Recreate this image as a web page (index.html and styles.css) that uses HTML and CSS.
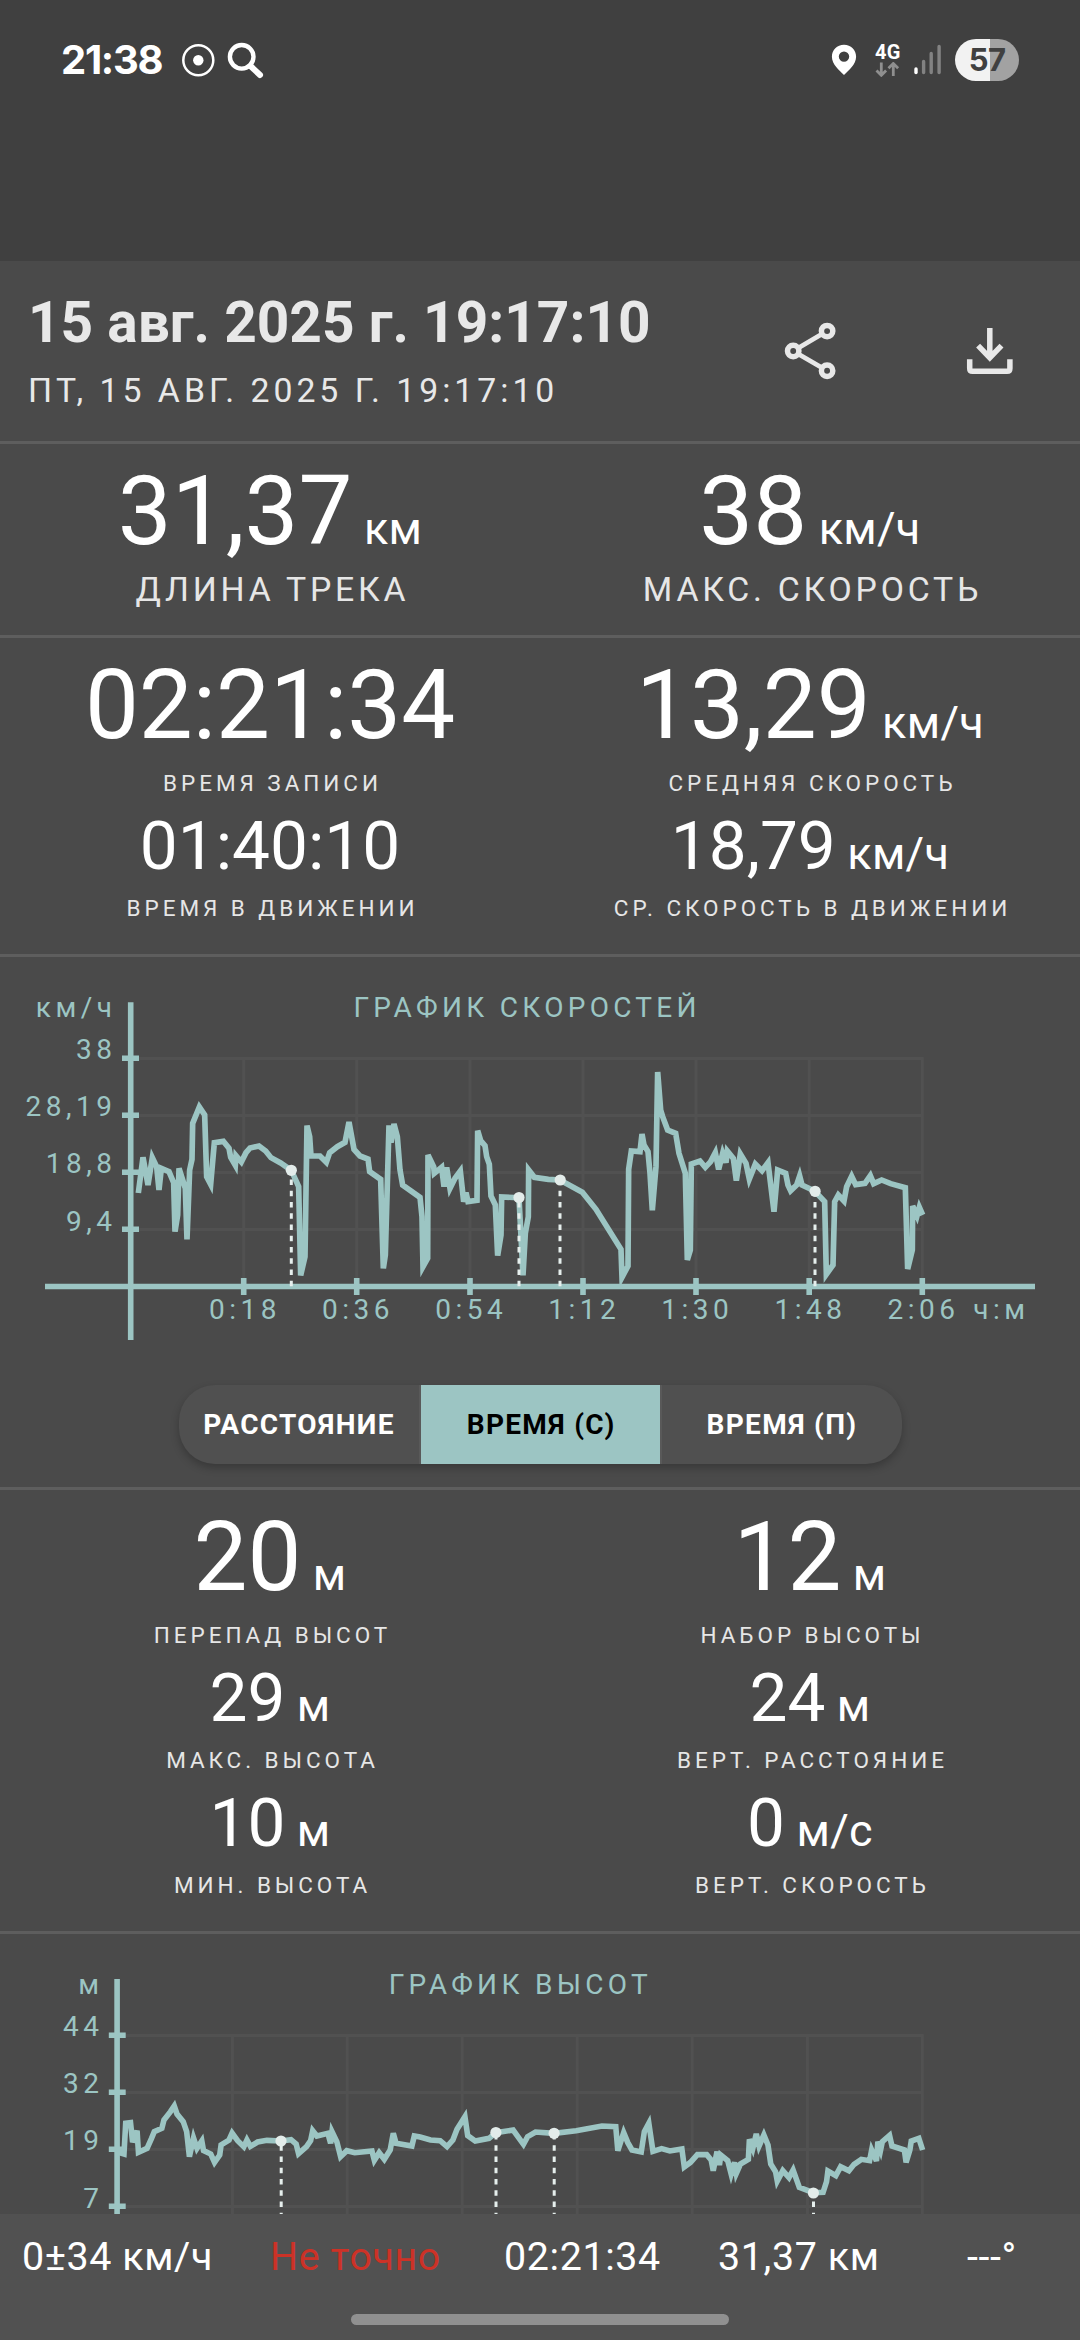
FILE: index.html
```html
<!DOCTYPE html>
<html lang="ru">
<head>
<meta charset="utf-8">
<title>15 авг. 2025 г. 19:17:10</title>
<link rel="stylesheet" href="styles.css">
</head>
<body>
<div class="screen">
  <div class="status">
    <div class="status-row">
      <span class="clock">21:38</span>
      <svg class="status-left" viewBox="180 34 90 50" width="90" height="50">
        <circle cx="198.3" cy="60.3" r="15" fill="none" stroke="#fff" stroke-width="2.5"/>
        <circle cx="198.3" cy="60.3" r="5.2" fill="#fff"/>
        <circle cx="241.7" cy="56.8" r="11.8" fill="none" stroke="#fff" stroke-width="4.4"/>
        <path d="M250.5 66L260 75" fill="none" stroke="#fff" stroke-width="6" stroke-linecap="round"/>
      </svg>
      <svg class="pin" viewBox="830 34 28 50" width="28" height="50">
        <path fill="#fff" fill-rule="evenodd" d="M844 44.7c-7 0-12.1 5.2-12.1 12 0 8 7.500 13.200 12.100 18.300c4.600-5.100 12.100-10.300 12.100-18.300c0-6.800-5.100-12-12.100-12zM844 51.400a5.200 5.200 0 1 1 0 10.400a5.200 5.200 0 1 1 0-10.400z"/>
      </svg>
      <div class="net">
        <span class="net-type">4G</span>
        <svg viewBox="875 62 26 15" width="26" height="15" fill="none" stroke="#8f8f8f" stroke-width="2.8">
          <path d="M881.300 62.500V75M876.500 70.500l4.800 4.800l4.800-4.800M893.300 76V63.700M888.500 68.300l4.800-4.800l4.800 4.800"/>
        </svg>
      </div>
      <svg class="signal" viewBox="912 34 32 50" width="32" height="50" stroke-width="3.400" stroke-linecap="round">
        <path stroke="#fff" d="M916 69V72.600"/>
        <path stroke="#828282" d="M923.600 61.500V72.600M931.200 53.500V72.600M939.100 46.500V72.600"/>
      </svg>
      <div class="battery">57</div>
    </div>
  </div>

  <header class="header">
    <div class="titles">
      <h1 class="title">15 авг. 2025 г. 19:17:10</h1>
      <div class="subtitle">ПТ, 15 АВГ. 2025 Г. 19:17:10</div>
    </div>
    <svg class="share" viewBox="780 320 60 60" width="60" height="60" fill="none" stroke="#e8e8e8" stroke-width="5.500">
      <circle cx="827.100" cy="331.100" r="5.700"/><circle cx="793.200" cy="351" r="5.700"/><circle cx="827.100" cy="370.700" r="5.700"/>
      <path stroke-width="4.800" d="M798.300 348L822 334M798.300 354L822 367.800"/>
    </svg>
    <svg class="download" viewBox="960 320 60 60" width="60" height="60" fill="none" stroke="#e8e8e8" stroke-width="5.500">
      <path d="M989.800 328V357M978.100 345.700l11.700 12l11.700-12M969.700 359.300v9.200q0 2.800 2.800 2.800h34.600q2.800 0 2.800-2.800v-9.200"/>
    </svg>
  </header>

  <section class="stats one">
    <div class="cell">
      <div class="big">31,37<small> км</small></div>
      <div class="label wide">ДЛИНА ТРЕКА</div>
    </div>
    <div class="cell">
      <div class="big">38<small> км/ч</small></div>
      <div class="label wide">МАКС. СКОРОСТЬ</div>
    </div>
  </section>

  <section class="stats two">
    <div class="cell">
      <div class="big">02:21:34</div><div class="label">ВРЕМЯ ЗАПИСИ</div>
      <div class="mid">01:40:10</div><div class="label">ВРЕМЯ В ДВИЖЕНИИ</div>
    </div>
    <div class="cell">
      <div class="big">13,29<small> км/ч</small></div><div class="label">СРЕДНЯЯ СКОРОСТЬ</div>
      <div class="mid">18,79<small> км/ч</small></div><div class="label">СР. СКОРОСТЬ В ДВИЖЕНИИ</div>
    </div>
  </section>

  <section class="speed">
    <svg class="chart" viewBox="0 957 1080 428" width="1080" height="428">
      <path class="grid" d="M131 1058.500H923.700M131 1115.500H922M131 1172.500H922M131 1229.500H922M243.700 1058V1286M356.700 1058V1286M470 1058V1286M583 1058V1286M696 1058V1286M809.200 1058V1286M922.300 1058V1286"/>
      <path class="axis" d="M130.700 1002.300V1340M45 1286.500H1035M122 1058.300H139M122 1115.300H139M122 1172.300H139M122 1229.300H139M243.700 1278V1295M356.700 1278V1295M470 1278V1295M583 1278V1295M696 1278V1295M809.200 1278V1295M922.300 1278V1295"/>
      <!-- plot units: one third of a pixel -->
      <polyline class="line" transform="translate(0 970) scale(.33333)" points="415,669 429,562 444,645 457,563 470,590 477,660 484,595 507,605 521,638 525,785 533,735 537,595 556,655 561,808 569,600 576,568 578,460 598,411 614,435 620,620 632,643 643,518 670,514 687,535 692,562 706,586 708,557 724,576 738,548 750,534 777,528 797,543 813,563 842,579 874,601 896,650 902,916 915,860 921,467 929,500 933,558 960,558 979,577 989,548 1012,530 1035,517 1047,456 1062,538 1080,558 1104,567 1109,605 1142,628 1150,895 1156,855 1167,466 1173,518 1182,462 1192,500 1200,600 1208,645 1260,682 1266,740 1269,890 1283,865 1284,555 1301,590 1303,610 1325,592 1332,650 1340,592 1350,655 1365,625 1381,603 1391,695 1398,668 1404,695 1431,691 1433,482 1442,512 1455,527 1460,560 1468,583 1473,678 1486,705 1493,857 1503,795 1505,681 1557,683 1569,916 1576,790 1585,740 1586,600 1603,622 1645,628 1680,630 1747,667 1788,718 1863,838 1866,922 1884,888 1886,598 1894,543 1920,545 1926,492 1932,525 1944,545 1950,610 1957,721 1968,590 1973,306 1982,420 1988,440 2003,480 2027,490 2037,550 2056,610 2062,870 2071,840 2074,582 2100,573 2116,592 2132,575 2146,548 2156,598 2168,550 2178,578 2182,543 2200,565 2209,632 2221,552 2238,580 2248,627 2266,582 2286,602 2304,578 2322,725 2333,600 2357,610 2364,645 2372,662 2390,645 2399,618 2406,645 2444,663 2474,695 2479,913 2499,885 2504,695 2515,675 2532,693 2540,650 2555,619 2567,644 2595,640 2611,617 2621,641 2645,630 2672,641 2716,653 2723,897 2737,840 2738,708 2751,738 2758,712 2768,735"/>
      <path class="drop" d="M291.300 1286.300V1170M519 1286.300V1198M560 1286.300V1180M815 1286.300V1192"/>
      <g class="dot"><circle cx="291.300" cy="1170.300" r="5.600"/><circle cx="519" cy="1197.500" r="5.600"/><circle cx="560.200" cy="1180" r="5.600"/><circle cx="815.100" cy="1191.300" r="5.600"/></g>
      <text x="353.500" y="1017">ГРАФИК СКОРОСТЕЙ</text>
      <g class="y-labels"><text x="116.500" y="1017">км/ч</text><text x="116.500" y="1059">38</text><text x="116.500" y="1116">28,19</text><text x="116.500" y="1173">18,8</text><text x="116.500" y="1230.500">9,4</text></g>
      <g class="x-labels"><text x="245" y="1319">0:18</text><text x="358" y="1319">0:36</text><text x="471.300" y="1319">0:54</text><text x="584.300" y="1319">1:12</text><text x="697.300" y="1319">1:30</text><text x="810.500" y="1319">1:48</text><text x="923.500" y="1319">2:06</text><text x="1001.500" y="1319">ч:м</text></g>
    </svg>
    <div class="tabs">
      <div class="tab">РАССТОЯНИЕ</div>
      <div class="tab active">ВРЕМЯ (С)</div>
      <div class="tab">ВРЕМЯ (П)</div>
    </div>
  </section>

  <section class="stats three">
    <div class="cell">
      <div class="big">20<small> м</small></div><div class="label">ПЕРЕПАД ВЫСОТ</div>
      <div class="mid">29<small> м</small></div><div class="label">МАКС. ВЫСОТА</div>
      <div class="mid">10<small> м</small></div><div class="label">МИН. ВЫСОТА</div>
    </div>
    <div class="cell">
      <div class="big">12<small> м</small></div><div class="label">НАБОР ВЫСОТЫ</div>
      <div class="mid">24<small> м</small></div><div class="label">ВЕРТ. РАССТОЯНИЕ</div>
      <div class="mid">0<small> м/с</small></div><div class="label">ВЕРТ. СКОРОСТЬ</div>
    </div>
  </section>

  <section class="height">
    <svg class="chart" viewBox="0 1934 1080 280" width="1080" height="280">
      <path class="grid" d="M117 2035.500H923.700M117 2092.500H922M117 2149.500H922M117 2206.500H922M232.400 2035V2214M347.200 2035V2214M462.200 2035V2214M577.200 2035V2214M692.200 2035V2214M807.400 2035V2214M922.300 2035V2214"/>
      <path class="axis" d="M117.100 1979V2214M108.800 2035.300H125.700M108.800 2092.300H125.700M108.800 2149.300H125.700M108.800 2206.300H125.700"/>
      <polyline class="line fixed" transform="translate(0 1930) scale(.34439 .33333)" points="342,666 360,672 365,580 379,578 385,637 398,602 402,667 427,655 440,625 448,605 470,595 476,570 495,545 506,528 514,552 532,575 542,605 550,680 562,624 572,655 586,633 591,662 612,672 623,697 638,675 642,645 665,630 674,609 690,632 708,650 717,630 727,649 748,636 775,631 816,633 845,629 860,642 867,671 890,650 902,632 908,602 920,618 952,610 960,640 964,605 978,635 989,680 1007,662 1030,668 1080,663 1087,691 1101,668 1116,688 1133,660 1142,610 1150,640 1196,648 1203,618 1220,621 1250,630 1278,632 1298,650 1315,630 1327,598 1350,560 1358,617 1380,633 1420,625 1440,608 1490,600 1520,643 1532,620 1555,606 1609,610 1673,602 1748,588 1788,590 1794,662 1811,608 1823,638 1835,660 1862,666 1871,605 1884,580 1896,664 1921,656 1945,663 1980,657 1987,711 2005,697 2025,674 2052,674 2065,690 2071,722 2082,665 2089,705 2093,675 2113,692 2123,732 2133,697 2138,730 2150,702 2173,688 2176,628 2186,655 2196,612 2204,648 2218,615 2230,645 2238,702 2252,725 2257,753 2273,722 2291,743 2303,720 2321,772 2362,788 2390,787 2400,755 2404,723 2427,737 2441,710 2465,722 2480,703 2501,688 2525,692 2531,660 2545,693 2549,635 2557,660 2562,635 2583,616 2590,648 2626,660 2631,697 2642,660 2646,633 2668,625 2679,660"/>
      <path class="drop" d="M281.200 2263.300V2141M496 2263.300V2132M554.200 2263.300V2133M813.500 2263.300V2193"/>
      <g class="dot"><circle cx="281" cy="2141" r="5.600"/><circle cx="495.900" cy="2132.500" r="5.600"/><circle cx="554.100" cy="2133.300" r="5.600"/><circle cx="813.400" cy="2193" r="5.600"/></g>
      <text x="388.700" y="1994">ГРАФИК ВЫСОТ</text>
      <g class="y-labels"><text x="103.500" y="1994">м</text><text x="103.500" y="2036">44</text><text x="103.500" y="2093">32</text><text x="103.500" y="2150">19</text><text x="103.500" y="2208">7</text></g>
    </svg>
  </section>

  <footer class="bottom">
    <div class="bottom-row">
      <span>0±34 км/ч</span><span class="warn">Не точно</span><span>02:21:34</span><span>31,37 км</span><span>---°</span>
    </div>
    <div class="handle"></div>
  </footer>
</div>
</body>
</html>
```
FILE: styles.css
```css
* { box-sizing: border-box; }
body { margin: 0; background: #4a4a4a; }
svg { display: block; flex: none; }
.screen {
  width: 1080px; height: 2340px; overflow: hidden;
  display: flex; flex-direction: column;
  background: #4a4a4a; color: #fff;
  font-family: Roboto, sans-serif;
}
.screen > * { flex: none; }

/* status bar */
.status { height: 261px; padding-top: 34px; background: #404040; }
.status-row { display: flex; align-items: center; height: 50px; padding-left: 61px; }
.clock { width: 119px; font: 700 40px/51px Inter, sans-serif; letter-spacing: -1.3px; }
.pin { margin-left: 560px; }
.net { width: 27px; height: 50px; margin-left: 17px; padding-top: 8px; }
.net-type { display: block; font-weight: 700; font-size: 20px; line-height: 20px; letter-spacing: .4px; }
.signal { margin-left: 10px; }
.battery {
  width: 64px; height: 42px; margin: 2px 0 0 11px; border-radius: 21px;
  background: linear-gradient(90deg, #f2f2f2 35.500px, #a2a2a2 35.500px);
  color: #404040; text-align: center;
  font: 700 31px/41px Inter, sans-serif; letter-spacing: -.6px;
}

/* track header */
.header { display: flex; height: 183px; padding: 26px 0 0 28px; border-bottom: 3px solid #5e5e5e; color: #e8e8e8; }
.titles { width: 752px; }
.title { margin: 0; font-size: 56.800px; line-height: 71px; font-weight: 700; }
.subtitle { margin-top: 10px; font-size: 33.750px; line-height: 45px; letter-spacing: 3.990px; }
.share { margin-top: 33px; }
.download { margin: 33px 0 0 120px; }

/* metric grids */
.stats { display: grid; grid-template-columns: 540px 540px; padding-top: 16px; border-bottom: 3px solid #5e5e5e; text-align: center; white-space: nowrap; }
.one { height: 194px; }
.two { height: 319px; }
.three { height: 444px; }
.big { height: 101px; font-size: 96px; line-height: 102px; }
.mid { height: 80px; margin-top: 7px; font-size: 67.500px; line-height: 80px; }
small { font-size: 45px; letter-spacing: .3px; }
.label { height: 31px; margin-top: 7px; padding-left: 5px; font-size: 22.500px; line-height: 31px; letter-spacing: 3.950px; color: #e6e6e6; }
.big + .label { margin-top: 13px; }
.big + .wide { height: 47px; margin-top: 5px; font-size: 33.750px; line-height: 47px; letter-spacing: 3.800px; }

/* charts */
.speed { height: 533px; border-bottom: 3px solid #5e5e5e; }
.height { height: 280px; overflow: hidden; }
.chart text { font-size: 28px; letter-spacing: 4.300px; fill: #9cc5c3; }
.chart .y-labels text { text-anchor: end; letter-spacing: 4.500px; }
.chart .x-labels text { text-anchor: middle; letter-spacing: 4.500px; }
.grid { fill: none; stroke: #515151; stroke-width: 3; }
.axis { fill: none; stroke: #9cc5c3; stroke-width: 5.600; }
.line { fill: none; stroke: #9cc5c3; stroke-width: 17; }
.line.fixed { stroke-width: 5.600; vector-effect: non-scaling-stroke; }
.drop { fill: none; stroke: #e6efed; stroke-width: 3; stroke-dasharray: 5.600 5.650; }
.dot { fill: #e3ecea; }

.tabs { display: grid; grid-template-columns: 242px 239px 242px; width: 723px; height: 79px; margin-left: 179px; border-radius: 36px; background: #505050; box-shadow: 0 4px 8px rgba(0, 0, 0, .24); }
.tab { font-size: 28px; line-height: 79px; font-weight: 700; letter-spacing: 1.300px; text-align: center; }
.tab:first-child { border-right: 2px solid #595959; }
.tab:last-child { border-left: 2px solid #595959; }
.active { padding-left: 1.500px; background: #9cc5c3; color: #000; }

/* live bar */
.bottom { height: 126px; padding-top: 12px; background: #515151; }
.bottom-row { display: grid; grid-template-columns: 248px 234px 214px 249px auto; padding-left: 22px; font-size: 39.400px; line-height: 61px; letter-spacing: .620px; }
.warn { color: #cc3227; }
.handle { width: 378px; height: 11px; margin: 27px auto 0; border-radius: 6px; background: #909090; }
```
